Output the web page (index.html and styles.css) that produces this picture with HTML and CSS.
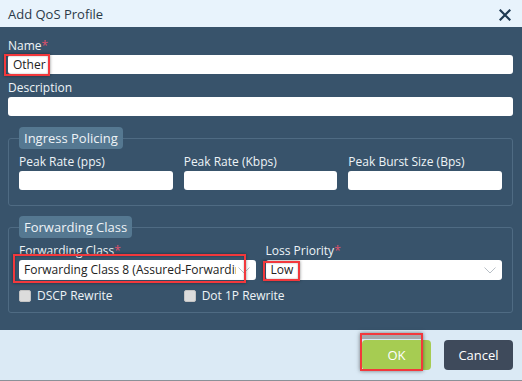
FILE: index.html
```html
<!DOCTYPE html>
<html lang="en">
<head>
  <meta charset="UTF-8" />
  <meta name="viewport" content="width=device-width, initial-scale=1.0" />
  <title>Add QoS Profile</title>
  <link rel="stylesheet" href="styles.css">
</head>
<body>
  <div class="dialog">
    <header class="dialog-header">
      <span class="dialog-title">Add QoS Profile</span>
      <svg class="close" width="12" height="12" viewBox="0 0 12 12"><path d="M1.5 1.5L10.5 10.5M10.5 1.5L1.5 10.5" stroke="#1e3a52" stroke-width="2.2" stroke-linecap="square"/></svg>
    </header>
    <div class="dialog-body">
      <div class="field">
        <label>Name<span class="req">*</span></label>
        <div class="control">
          <div class="input">Other</div>
          <span class="mark mark-name"></span>
        </div>
      </div>
      <div class="field">
        <label>Description</label>
        <div class="input"></div>
      </div>

      <fieldset class="group">
        <legend>Ingress Policing</legend>
        <div class="cols-3">
          <div class="field">
            <label>Peak Rate (pps)</label>
            <div class="input"></div>
          </div>
          <div class="field">
            <label>Peak Rate (Kbps)</label>
            <div class="input"></div>
          </div>
          <div class="field">
            <label>Peak Burst Size (Bps)</label>
            <div class="input"></div>
          </div>
        </div>
      </fieldset>

      <fieldset class="group group-fc">
        <legend>Forwarding Class</legend>
        <div class="cols-2">
          <div class="field">
            <label>Forwarding Class<span class="req">*</span></label>
            <div class="control">
              <div class="input select"><span class="value">Forwarding Class 8 (Assured-Forwarding)</span>
                <svg class="chev" width="12" height="7" viewBox="0 0 12 7"><path d="M0.5 0.5L6 6L11.5 0.5" fill="none" stroke="#b8bfc6" stroke-width="1"/></svg>
              </div>
              <span class="mark mark-fc"></span>
            </div>
          </div>
          <div class="field">
            <label>Loss Priority<span class="req">*</span></label>
            <div class="control">
              <div class="input select"><span class="value">Low</span>
                <svg class="chev" width="12" height="7" viewBox="0 0 12 7"><path d="M0.5 0.5L6 6L11.5 0.5" fill="none" stroke="#b8bfc6" stroke-width="1"/></svg>
              </div>
              <span class="mark mark-lp"></span>
            </div>
          </div>
        </div>
        <div class="cols-3 checks">
          <label class="check"><span class="box"></span>DSCP Rewrite</label>
          <label class="check"><span class="box"></span>Dot 1P Rewrite</label>
        </div>
      </fieldset>
    </div>
    <footer class="dialog-footer">
      <div class="control">
        <button class="btn btn-ok">OK</button>
        <span class="mark mark-ok"></span>
      </div>
      <button class="btn btn-cancel">Cancel</button>
    </footer>
  </div>
</body>
</html>
```

FILE: styles.css
```css
* {
  box-sizing: border-box;
}
body {
  margin: 0;
  width: 522px;
  height: 381px;
  overflow: hidden;
  font-family: 'Open Sans', sans-serif;
  font-size: 12px;
}
.dialog {
  height: 381px;
  display: flex;
  flex-direction: column;
  background: #38536b;
}
.dialog-header {
  height: 27px;
  background: #e8f3fc;
  display: flex;
  align-items: center;
  justify-content: space-between;
  padding: 0 11px 0 8px;
}
.dialog-title {
  font-size: 13px;
  color: #2b3a48;
}
.close {
  margin-top: 3px;
}
.dialog-body {
  flex: 1;
  padding: 10px 9px 0 8px;
  color: #eef3f7;
}
.field label {
  display: block;
  line-height: 17px;
  margin-bottom: 1px;
}
.field + .field {
  margin-top: 5px;
}
.req {
  color: #e0506a;
}
.control {
  position: relative;
}
.input {
  height: 19px;
  background: #fff;
  border-radius: 3px;
  color: #222;
  line-height: 19px;
  padding: 0 5px;
  white-space: nowrap;
  overflow: hidden;
}
.select {
  position: relative;
  padding-right: 20px;
  height: 20px;
  line-height: 20px;
}
.select .value {
  display: block;
  overflow: hidden;
}
.chev {
  position: absolute;
  right: 6px;
  top: 7px;
}
.group {
  margin: 11px 0 0;
  padding: 0 10px 15px;
  border: 1px solid #4f6b83;
  border-radius: 3px;
  min-width: 0;
}
.group legend {
  background: #557891;
  border-radius: 4px;
  padding: 0 5px;
  font-size: 13px;
  line-height: 22px;
  margin-bottom: 4px;
}
.group-fc {
  margin-top: 10px;
  padding-bottom: 8px;
}
.cols-3 {
  display: grid;
  grid-template-columns: repeat(3, minmax(0, 1fr));
  gap: 11px;
}
.cols-3 .field + .field,
.cols-2 .field + .field {
  margin-top: 0;
}
.cols-2 {
  display: grid;
  grid-template-columns: minmax(0, 1fr) minmax(0, 1fr);
  gap: 10px;
}
.checks {
  margin-top: 8px;
}
.check {
  display: flex;
  align-items: center;
  gap: 6px;
  font-size: 12px;
  line-height: 16px;
}
.box {
  width: 12px;
  height: 12px;
  background: #dcdcdc;
  border: 1px solid #c4c4c4;
  border-radius: 2px;
}
.dialog-footer {
  height: 51px;
  background: #dbeaf5;
  border-bottom: 1px solid #8b9198;
  display: flex;
  justify-content: flex-end;
  align-items: flex-start;
  gap: 13px;
  padding: 10px 9px 0 0;
}
.btn {
  width: 69px;
  height: 30px;
  border: none;
  border-radius: 4px;
  font-family: 'Open Sans', sans-serif;
  font-size: 13px;
  color: #fff;
  padding: 0;
}
.btn-ok {
  background: #a6cc52;
  display: block;
}
.btn-cancel {
  background: #3e4a5b;
}
.mark {
  position: absolute;
  border: 2px solid #f2383c;
  box-shadow: 0 0 3px rgba(0, 0, 0, 0.45), inset 0 0 2px rgba(0, 0, 0, 0.35);
  pointer-events: none;
}
.mark-name {
  left: -4px;
  top: -1px;
  width: 46px;
  height: 22px;
}
.mark-fc {
  left: -6px;
  top: -6px;
  width: 233px;
  height: 29px;
}
.mark-lp {
  left: -3px;
  top: 1px;
  width: 37px;
  height: 20px;
}
.mark-ok {
  left: -2px;
  top: -7px;
  width: 63px;
  height: 38px;
  border-top-width: 2px;
  background: linear-gradient(#a3a9ae 0, #a3a9ae 4px, transparent 4px);
  box-shadow: 0 0 4px rgba(0, 0, 0, 0.5);
}
```
